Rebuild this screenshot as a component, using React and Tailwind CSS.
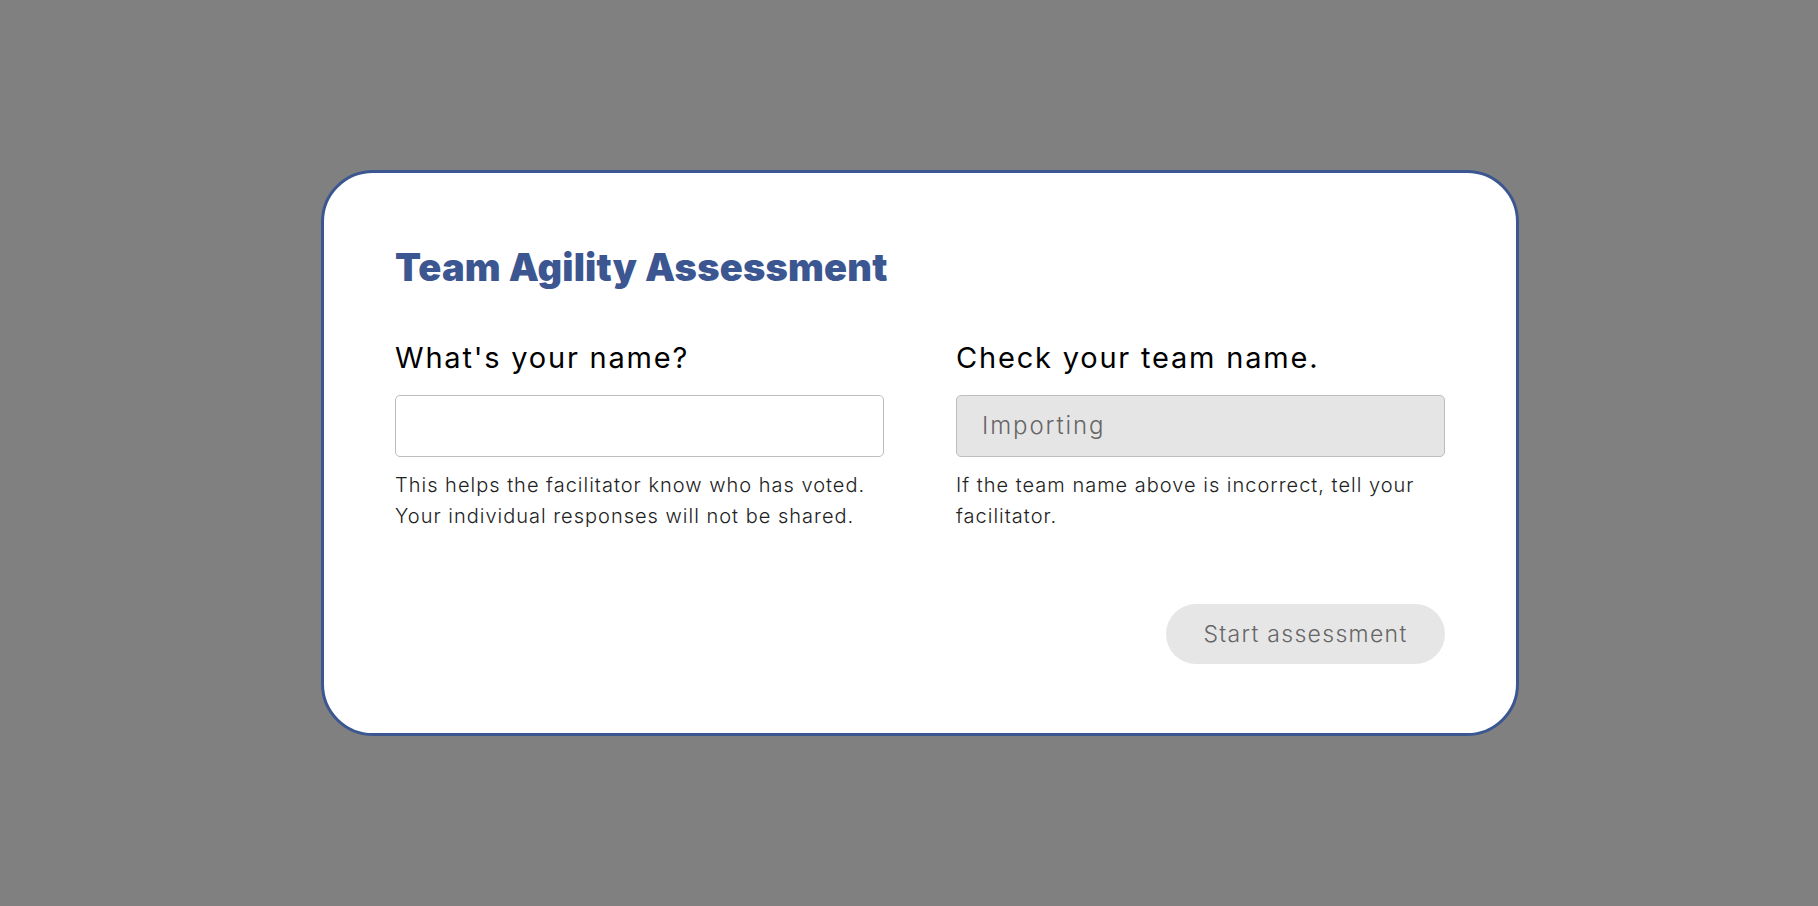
import React from "react";

export default function App() {
  return (
    <div className="min-h-screen bg-[#808080] flex items-center pl-[321px] font-['Inter','Open_Sans',sans-serif]">
      <div className="w-[1198px] h-[566px] bg-white border-[3px] border-[#3b5690] rounded-[52px] px-[71px] pt-[72px] flex flex-col">
        <h1 className="text-[38px] leading-[44px] font-black text-[#3b5690] tracking-[0.2px]">
          Team Agility Assessment
        </h1>

        <div className="grid grid-cols-2 gap-x-[72px] mt-[52px]">
          {/* Name field */}
          <div className="flex flex-col">
            <label className="text-[29px] leading-[34px] tracking-[1.8px] text-black">What's your name?</label>
            <input
              type="text"
              className="mt-[20px] h-[62px] w-full rounded-[5px] border border-[#bdbdbd] bg-white px-[26px] text-[24px] outline-none"
            />
            <p className="mt-[13px] text-[20px] leading-[31px] tracking-[1px] font-light text-[#222]">
              This helps the facilitator know who has voted.
              <br />
              Your individual responses will not be shared.
            </p>
          </div>

          {/* Team field */}
          <div className="flex flex-col">
            <label className="text-[29px] leading-[34px] tracking-[1.8px] text-black">Check your team name.</label>
            <div className="mt-[20px] h-[62px] w-full rounded-[5px] border border-[#bdbdbd] bg-[#e5e5e5] px-[25px] flex items-center text-[24px] tracking-[1.9px] font-light text-[#666]">
              Importing
            </div>
            <p className="mt-[13px] text-[20px] leading-[31px] tracking-[1px] font-light text-[#222]">
              If the team name above is incorrect, tell your facilitator.
            </p>
          </div>
        </div>

        <div className="flex justify-end mt-[72px]">
          <button className="h-[60px] w-[279px] rounded-full bg-[#e6e6e6] text-[23px] tracking-[1.3px] font-light text-[#666]">
            Start assessment
          </button>
        </div>
      </div>
    </div>
  );
}
